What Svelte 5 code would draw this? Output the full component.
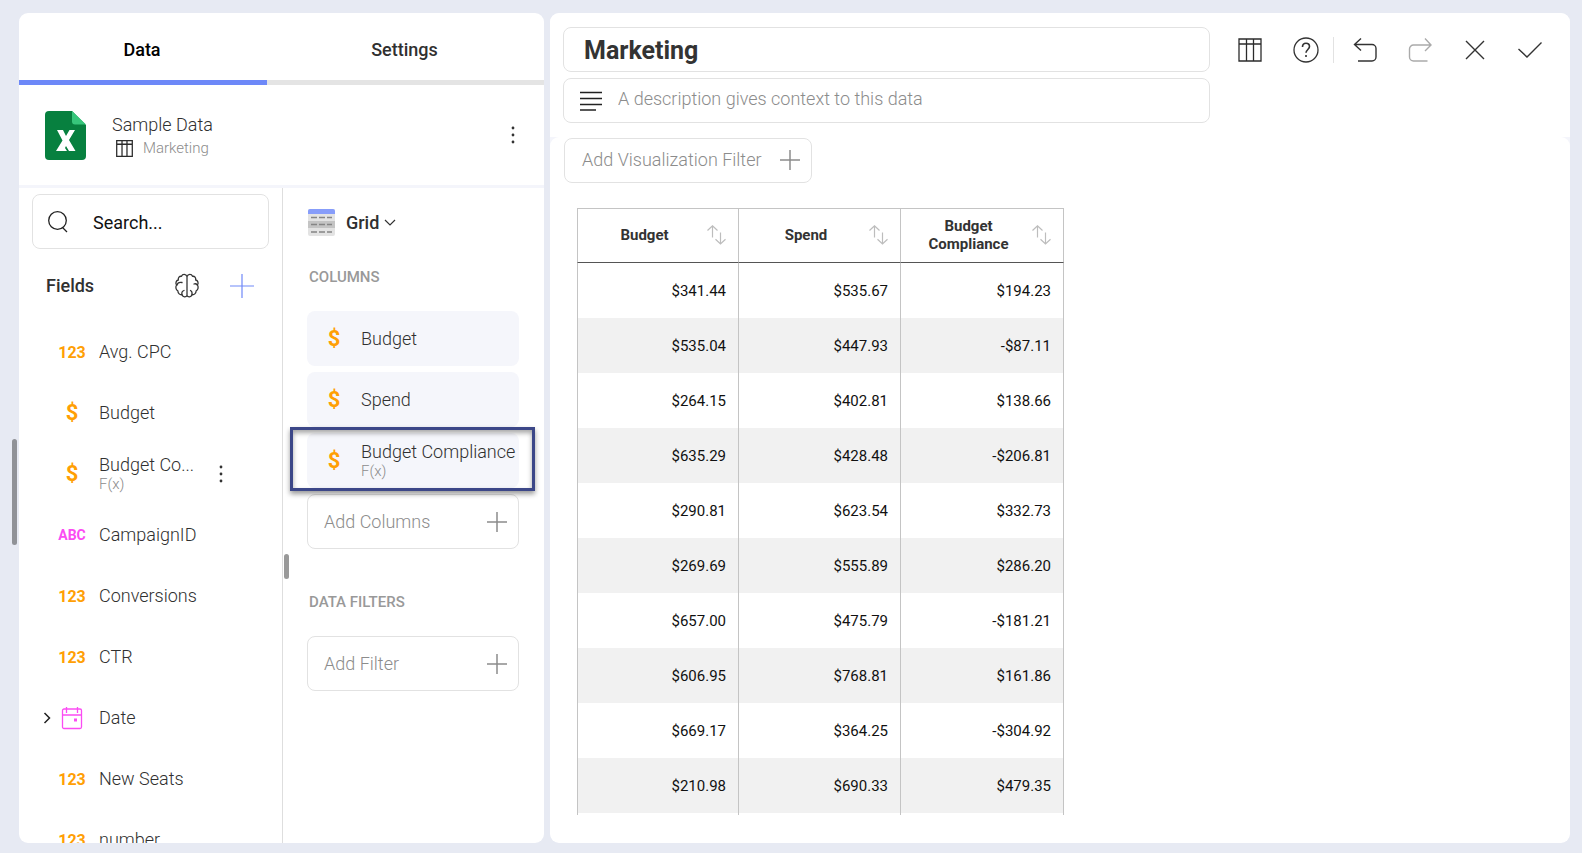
<script>
  const fields = [
    { kind: 'num', name: 'Avg. CPC' },
    { kind: 'cur', name: 'Budget' },
    { kind: 'cur', name: 'Budget Co...', note: 'F(x)', menu: true },
    { kind: 'abc', name: 'CampaignID' },
    { kind: 'num', name: 'Conversions' },
    { kind: 'num', name: 'CTR' },
    { kind: 'date', name: 'Date', expandable: true },
    { kind: 'num', name: 'New Seats' },
    { kind: 'num', name: 'number' }
  ];
  const glyphs = { num: '123', cur: '$', abc: 'ABC' };
  const columns = [
    { name: 'Budget' },
    { name: 'Spend' },
    { name: 'Budget Compliance', note: 'F(x)', selected: true }
  ];
  const rows = [
    ['$341.44', '$535.67', '$194.23'],
    ['$535.04', '$447.93', '-$87.11'],
    ['$264.15', '$402.81', '$138.66'],
    ['$635.29', '$428.48', '-$206.81'],
    ['$290.81', '$623.54', '$332.73'],
    ['$269.69', '$555.89', '$286.20'],
    ['$657.00', '$475.79', '-$181.21'],
    ['$606.95', '$768.81', '$161.86'],
    ['$669.17', '$364.25', '-$304.92'],
    ['$210.98', '$690.33', '$479.35'],
    ['', '', '']
  ];
  let title = $state('Marketing');
</script>

{#snippet plus(size)}
  <svg width={size} height={size} viewBox="0 0 24 24" fill="none" stroke="currentColor" aria-hidden="true">
    <path d="M12 0v24M0 12h24" stroke-width={size > 22 ? 1.2 : 1.8} />
  </svg>
{/snippet}

{#snippet dots()}
  <svg width="4" height="18" viewBox="0 0 4 18" fill="#333" aria-hidden="true">
    <circle cx="2" cy="2" r="1.4" /><circle cx="2" cy="9" r="1.4" /><circle cx="2" cy="16" r="1.4" />
  </svg>
{/snippet}

{#snippet tableIcon(size)}
  <svg width={size} height={size} viewBox="0 0 24 24" fill="none" stroke="#2b2b2b" stroke-width={size > 20 ? 1.3 : 1.8} aria-hidden="true">
    <path d="M1 1h22v22H1zM1 6h22M8.5 1v22M15.5 1v22" />
  </svg>
{/snippet}

<div class="editor">
  <i class="grip outer"></i>
  <aside class="panel side">
    <nav class="tabs">
      <button class="tab active">Data</button>
      <button class="tab">Settings</button>
    </nav>

    <header class="source">
      <svg width="41" height="49" viewBox="0 0 41 49" aria-hidden="true">
        <path d="M4 0h23l14 14v31a4 4 0 0 1-4 4H4a4 4 0 0 1-4-4V4a4 4 0 0 1 4-4z" fill="#07803f" />
        <path d="M27 0l14 13.500H30a3 3 0 0 1-3-3z" fill="#37c67b" />
        <path d="M12 19h6l3 6 3.500-6H30l-6 10 6.500 11H24l-3-5-1 2 2 3H11l6.500-10.500z" fill="#fff" />
      </svg>
      <div class="source-text">
        <span class="source-name">Sample Data</span>
        <span class="source-sheet">{@render tableIcon(17)} Marketing</span>
      </div>
      <button class="icon" aria-label="Data source menu">{@render dots()}</button>
    </header>

    <div class="body">
      <section class="fields">
        <label class="search">
          <svg width="21" height="22" viewBox="0 0 21 22" fill="none" stroke="#222" stroke-width="1.300" aria-hidden="true">
            <circle cx="9.500" cy="9.500" r="8.800" /><path d="M14.500 16.500l4.500 4.500" />
          </svg>
          <input type="text" placeholder="Search..." aria-label="Search fields" />
        </label>
        <div class="fields-head">
          <h2>Fields</h2>
          <button class="icon" aria-label="Machine learning">
            <svg width="26" height="26" viewBox="0 0 26 26" fill="none" stroke="#333" stroke-width="1.300" stroke-linecap="round" stroke-linejoin="round" aria-hidden="true">
              <path d="M13 3.500v19M13 3.500C12 .8 8.500.8 7.500 3.300 5.300 3 4 4.700 4.300 7 2 7.500 1.300 10 2.500 12c-1.300 2.300-.5 4.800 1.300 5.800.2 2.700 2 4.200 4.200 3.900 1 2.700 4 2.700 5 .8M13 3.500c1-2.700 4.500-2.700 5.500-.2 2.200-.3 3.500 1.400 3.200 3.700 2.300.5 3 3 1.800 5 1.300 2.300.5 4.800-1.300 5.800-.2 2.700-2 4.200-4.200 3.900-1 2.700-4 2.700-5 .8" />
              <path d="M3 12c.5-2 2.500-3 5-2.500M8 21.700c-.5-2 0-3.500 2-4.200M23.300 12c-.8-1-2-1.500-3.300-1M18 21.700c.3-2 0-3.500-1.500-4.200" />
            </svg>
          </button>
          <button class="icon accent" aria-label="Add field">{@render plus(24)}</button>
        </div>
        <ul class="field-list">
          {#each fields as f}
            <li>
              <span class="arrow">
                {#if f.expandable}
                  <svg width="8" height="12" viewBox="0 0 8 12" fill="none" stroke="#222" stroke-width="1.500" aria-hidden="true"><path d="M1.500 1l5 5-5 5" /></svg>
                {/if}
              </span>
              <span class="type {f.kind}">
                {#if f.kind === 'date'}
                  <svg width="22" height="24" viewBox="0 0 22 24" fill="none" stroke="#fb4cf3" stroke-width="1.300" aria-hidden="true">
                    <rect x="1.500" y="3" width="19" height="19.500" rx="1.500" />
                    <path d="M1.500 9h19M5.500 1v6M16.500 1v6" />
                    <path d="M13 12.500h3v3h-3z" fill="#fb4cf3" stroke="none" />
                  </svg>
                {:else}{glyphs[f.kind]}{/if}
              </span>
              <span class="label">
                <span>{f.name}</span>
                {#if f.note}<small>{f.note}</small>{/if}
              </span>
              {#if f.menu}<button class="icon more" aria-label="Field menu">{@render dots()}</button>{/if}
            </li>
          {/each}
        </ul>
      </section>

      <section class="setup">
        <i class="grip inner"></i>
        <button class="chart-type">
          <svg width="27" height="27" viewBox="0 0 27 27" aria-hidden="true">
            <rect width="27" height="27" rx="2" fill="#e3e3e3" />
            <path d="M0 5V2a2 2 0 0 1 2-2h23a2 2 0 0 1 2 2v3z" fill="#879dfa" />
            <path d="M0 12h27v7H0z" fill="#c4c4c4" />
            <path d="M3 8.500h21M3 15.500h21M3 23h21" stroke="#858585" stroke-width="1.400" stroke-dasharray="6 2" />
          </svg>
          Grid
          <svg class="chev" width="12" height="8" viewBox="0 0 12 8" fill="none" stroke="#333" stroke-width="1.200" aria-hidden="true"><path d="M1 1l5 5 5-5" /></svg>
        </button>

        <h3>COLUMNS</h3>
        <div class="stack">
          {#each columns as c}
            <div class="pill" class:selected={c.selected}>
              <span class="type cur">$</span>
              <span class="label">
                <span>{c.name}</span>
                {#if c.note}<small>{c.note}</small>{/if}
              </span>
            </div>
          {/each}
          <button class="add">Add Columns {@render plus(20)}</button>
        </div>

        <h3 class="second">DATA FILTERS</h3>
        <button class="add">Add Filter {@render plus(20)}</button>
      </section>
    </div>
  </aside>

  <main class="panel main">
    <header class="top">
      <div class="inputs">
        <input class="title" type="text" aria-label="Title" bind:value={title} />
        <label class="desc">
          <svg width="22" height="20" viewBox="0 0 22 20" stroke="#222" stroke-width="1.300" aria-hidden="true">
            <path d="M0 1.500h22M0 7.500h22M0 13.500h22M0 19h16" />
          </svg>
          <input type="text" placeholder="A description gives context to this data" aria-label="Description" />
        </label>
      </div>
      <div class="tools">
        <button class="icon" aria-label="Show data table">{@render tableIcon(24)}</button>
        <button class="icon" aria-label="Help">
          <svg width="26" height="26" viewBox="0 0 26 26" fill="none" stroke="#333" stroke-width="1.300" aria-hidden="true">
            <circle cx="13" cy="13" r="12" />
            <path d="M9.500 10c0-2.200 1.400-3.700 3.500-3.700s3.500 1.400 3.500 3.300c0 2.800-3.500 3-3.500 6.200" stroke-width="1.600" />
            <circle cx="13" cy="19" r="1.100" fill="#333" stroke="none" />
          </svg>
        </button>
        <i class="rule"></i>
        <button class="icon" aria-label="Undo">
          <svg width="24" height="24" viewBox="0 0 24 24" fill="none" stroke="#333" stroke-width="1.400" aria-hidden="true">
            <path d="M8 .5L1.500 6.500 8 12.500M1.500 6.500H19a4 4 0 0 1 4 4V19a4 4 0 0 1-4 4H5" />
          </svg>
        </button>
        <button class="icon" aria-label="Redo" disabled>
          <svg width="24" height="24" viewBox="0 0 24 24" fill="none" stroke="#aaa" stroke-width="1.400" aria-hidden="true">
            <path d="M17 .5l6 6.500-6 6M23 7H5.500a4 4 0 0 0-4 4v8a4 4 0 0 0 4 4h14" />
          </svg>
        </button>
        <button class="icon" aria-label="Close">
          <svg width="24" height="24" viewBox="0 0 24 24" fill="none" stroke="#333" stroke-width="1.400" aria-hidden="true"><path d="M3 3l18 18M21 3L3 21" /></svg>
        </button>
        <button class="icon" aria-label="Apply">
          <svg width="24" height="24" viewBox="0 0 24 24" fill="none" stroke="#333" stroke-width="1.400" aria-hidden="true"><path d="M.5 11l8.500 8L23.500 4.500" /></svg>
        </button>
      </div>
    </header>

    <section class="content">
      <button class="add viz">Add Visualization Filter {@render plus(20)}</button>
      <div class="grid-wrap">
        <table>
          <colgroup><col class="c1" /><col class="c2" /><col /></colgroup>
          <thead>
            <tr>
              {#each columns as c}
                <th scope="col">
                  <div class="th">
                    <span>{c.name}</span>
                    <svg width="19" height="20" viewBox="0 0 19 20" fill="none" stroke="#bdbdbd" stroke-width="1.200" aria-hidden="true">
                      <path d="M5.500 12.500V1M.5 5.500l5-4.700 5 4.700M13.500 7.500v11.500M8.500 14.300l5 4.700 5-4.700" />
                    </svg>
                  </div>
                </th>
              {/each}
            </tr>
          </thead>
          <tbody>
            {#each rows as r}
              <tr>{#each r as v}<td>{v}</td>{/each}</tr>
            {/each}
          </tbody>
        </table>
      </div>
    </section>
  </main>
</div>

<style>
  :global(body) { margin: 0; background: #e7eaf3; }
  :global(*) { box-sizing: border-box; }
  .editor {
    position: relative;
    display: flex;
    gap: 6px;
    height: 100vh;
    padding: 13px 12px 10px 19px;
    font-family: Roboto, "Liberation Sans", sans-serif;
    font-size: 18px;
    line-height: 22px;
    color: #303030;
  }
  button, input {
    font: inherit;
    color: inherit;
    background: none;
    border: 0;
    padding: 0;
    outline: none;
  }
  svg { display: block; flex: none; }
  h2, h3, ul { margin: 0; padding: 0; list-style: none; }
  .icon { display: flex; align-items: center; justify-content: center; }
  .panel { border-radius: 9px; overflow: hidden; background: #fff; display: flex; flex-direction: column; }
  .side { flex: 0 0 525px; }
  .main { flex: 1; min-width: 0; background: #f4f5fb; }

  .grip { position: absolute; width: 5px; border-radius: 3px; background: #999; }
  .grip.outer { left: 12px; top: 439px; height: 106px; background: #909297; }
  .grip.inner { left: 1px; top: 366px; height: 25px; }

  .tabs { display: grid; grid-template-columns: 248px 1fr; height: 72px; flex: none; }
  .tab { border-bottom: 5px solid #e4e4e4; font-weight: 500; padding: 6px 2px 0 0; }
  .tab.active { border-color: #6d88f8; color: #000; }

  .source { display: flex; align-items: center; flex: none; height: 103px; padding: 0 26px; border-bottom: 3px solid #f4f5fb; }
  .source-text { flex: 1; display: flex; flex-direction: column; padding: 4px 0 0 26px; font-weight: 300; }
  .source-sheet { display: flex; align-items: center; gap: 10px; padding-left: 4px; font-size: 15px; line-height: 24px; color: #8c8c8c; }
  .source .icon { width: 10px; }

  .body { display: flex; flex: 1; min-height: 0; }
  .fields { flex: 0 0 264px; min-width: 0; border-right: 1px solid #dedede; overflow: hidden; padding-top: 6px; }
  .search { display: flex; align-items: center; height: 55px; margin: 0 13px; padding: 1px 15px 0; gap: 24px; border: 1px solid #e2e2e2; border-radius: 8px; }
  .search input { min-width: 0; flex: 1; padding-top: 1px; }
  .search input::placeholder { color: #111; opacity: 1; }
  .fields-head { display: flex; align-items: center; padding: 24px 28px 0 27px; }
  h2 { flex: 1; font-size: 18px; font-weight: 500; line-height: 26px; }
  .accent { color: #7089f8; margin-left: 30px; }
  .field-list { padding-top: 22px; }
  .field-list li { display: flex; align-items: center; height: 61px; padding-left: 24px; font-weight: 300; }
  .arrow { width: 10px; }
  .type { display: flex; justify-content: center; align-items: center; width: 38px; font-weight: 700; color: #ff9f05; font-size: 16px; }
  .type.num { padding-top: 2px; }
  .type.abc { font-size: 14px; color: #fb4cf3; }
  .type.cur { font-size: 22px; }
  .label { display: flex; flex-direction: column; margin-left: 8px; min-width: 0; white-space: nowrap; }
  small { font-size: 15px; line-height: 17px; color: #8c8c8c; }
  .more { margin-left: 25px; }

  .setup { position: relative; flex: 1; min-width: 0; padding: 20px 25px 0 24px; }
  .chart-type { display: flex; align-items: center; font-weight: 500; gap: 11px; padding: 1px 0 0 1px; margin-bottom: 30px; }
  .chev { margin-left: -6px; }
  h3 { font-size: 15px; font-weight: 500; line-height: 22px; color: #999; padding-left: 2px; margin-bottom: 23px; }
  .second { margin-top: 42px; }
  .stack { display: grid; gap: 6px; }
  .pill { position: relative; display: flex; align-items: center; height: 55px; padding-left: 8px; border-radius: 8px; background: #f5f6fb; font-weight: 300; }
  .selected::after {
    content: "";
    position: absolute;
    z-index: 1;
    inset: -6px -16px -3px -17px;
    border: 3px solid #3c4788;
    box-shadow: 0 3px 5px rgba(0, 0, 0, .4), inset 0 3px 5px rgba(0, 0, 0, .35);
  }
  .add { display: flex; align-items: center; justify-content: space-between; width: 100%; height: 55px; padding: 0 11px 0 16px; border: 1px solid #e2e2e2; border-radius: 8px; color: #8c8c8c; font-weight: 300; }

  .top { display: flex; justify-content: space-between; flex: none; height: 124px; padding: 14px 28px 0 13px; background: #fff; }
  .inputs { flex: 0 1 647px; display: flex; flex-direction: column; gap: 6px; }
  .title, .desc { height: 45px; border: 1px solid #e2e2e2; border-radius: 8px; }
  .title { padding: 1px 20px 0; font-size: 25px; font-weight: 700; color: #333; }
  .desc { display: flex; align-items: center; gap: 16px; padding: 0 16px; }
  .desc input { flex: 1; min-width: 0; font-weight: 300; padding-bottom: 4px; }
  .desc input::placeholder { color: #8c8c8c; opacity: 1; }
  .tools { display: flex; gap: 31px; height: 45px; align-items: center; }
  .rule { width: 1px; height: 26px; background: #e2e2e2; margin: 0 -12px 0 -17px; }

  .content { flex: 1; min-height: 0; display: flex; flex-direction: column; padding: 1px 14px 28px; background: #fff; border-radius: 9px; }
  .viz { align-self: flex-start; width: auto; height: 45px; gap: 18px; padding: 0 11px 2px 17px; flex: none; }
  .grid-wrap { flex: 1; min-height: 0; overflow: hidden; margin: 25px 0 0 13px; }
  table { border-collapse: separate; border-spacing: 0; table-layout: fixed; width: 487px; font-size: 15px; line-height: 18px; color: #111; }
  .c1 { width: 161px; }
  .c2 { width: 162px; }
  th { height: 55px; padding: 0 12px 2px 4px; border-top: 1px solid #c4c4c4; border-bottom: 1px solid #555; border-left: 1px solid #c4c4c4; font-weight: 700; color: #333; }
  td { height: 55px; padding: 0 12px 0 11px; text-align: right; border-left: 1px solid #c4c4c4; }
  th:last-child, td:last-child { border-right: 1px solid #c4c4c4; }
  tbody tr:nth-child(even) { background: #f1f1f1; }
  .th { display: flex; align-items: center; }
  .th span { flex: 1; }
</style>
